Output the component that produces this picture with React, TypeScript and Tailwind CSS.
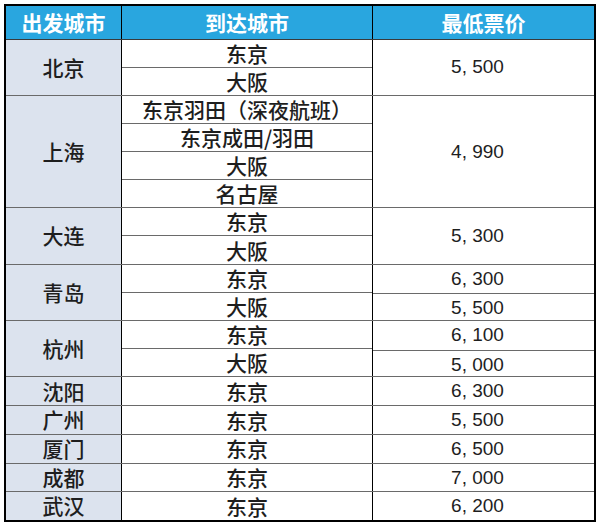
import React from 'react';

type Group = {
  city: string;
  dests: string[];
  prices: string[];
};

const groups: Group[] = [
  { city: '北京', dests: ['东京', '大阪'], prices: ['5, 500'] },
  { city: '上海', dests: ['东京羽田（深夜航班）', '东京成田/羽田', '大阪', '名古屋'], prices: ['4, 990'] },
  { city: '大连', dests: ['东京', '大阪'], prices: ['5, 300'] },
  { city: '青岛', dests: ['东京', '大阪'], prices: ['6, 300', '5, 500'] },
  { city: '杭州', dests: ['东京', '大阪'], prices: ['6, 100', '5, 000'] },
  { city: '沈阳', dests: ['东京'], prices: ['6, 300'] },
  { city: '广州', dests: ['东京'], prices: ['5, 500'] },
  { city: '厦门', dests: ['东京'], prices: ['6, 500'] },
  { city: '成都', dests: ['东京'], prices: ['7, 000'] },
  { city: '武汉', dests: ['东京'], prices: ['6, 200'] },
];

const cjk = "font-['Noto_Sans_CJK_SC','Noto_Sans',sans-serif]";

const App = () => {
  return (
    <div className="w-[600px] h-[526px] bg-white pt-[4px] pl-[4px]">
      <div className="w-[592px] h-[518px] border-2 border-black flex flex-col text-[#1e1e1e]">
        {/* header */}
        <div className={`h-[34px] flex bg-[#29a6df] border-b border-[#3a3a3a] text-white font-bold text-[21px] ${cjk}`}>
          <div className="w-[116px] border-r border-black flex items-center justify-center">出发城市</div>
          <div className="w-[251px] border-r border-black flex items-center justify-center">到达城市</div>
          <div className="flex-1 flex items-center justify-center">最低票价</div>
        </div>

        {/* body */}
        <div className="flex-1 flex flex-col">
          {groups.map((g, gi) => (
            <div
              key={g.city}
              className={`flex basis-0 min-h-0 ${gi < groups.length - 1 ? 'border-b border-[#6a6a6a]' : ''}`}
              style={{ flexGrow: g.dests.length }}
            >
              <div className={`w-[116px] border-r border-black bg-[#dce3ee] flex items-center justify-center text-[21px] font-medium ${cjk}`}>
                {g.city}
              </div>
              <div className={`w-[251px] border-r border-black flex flex-col text-[21px] font-medium ${cjk}`}>
                {g.dests.map((d, di) => (
                  <div
                    key={d}
                    className={`flex-1 basis-0 flex items-center justify-center leading-none ${di < g.dests.length - 1 ? 'border-b border-[#6a6a6a]' : ''}`}
                  >
                    {d}
                  </div>
                ))}
              </div>
              <div className="flex-1 flex flex-col font-['Liberation_Sans',Arial,sans-serif] text-[19px]">
                {g.prices.map((p, pi) => (
                  <div
                    key={pi}
                    className={`flex-1 basis-0 flex items-center justify-center pr-[12px] ${pi < g.prices.length - 1 ? 'border-b border-[#6a6a6a]' : ''}`}
                  >
                    {p}
                  </div>
                ))}
              </div>
            </div>
          ))}
        </div>
      </div>
    </div>
  );
};

export default App;
